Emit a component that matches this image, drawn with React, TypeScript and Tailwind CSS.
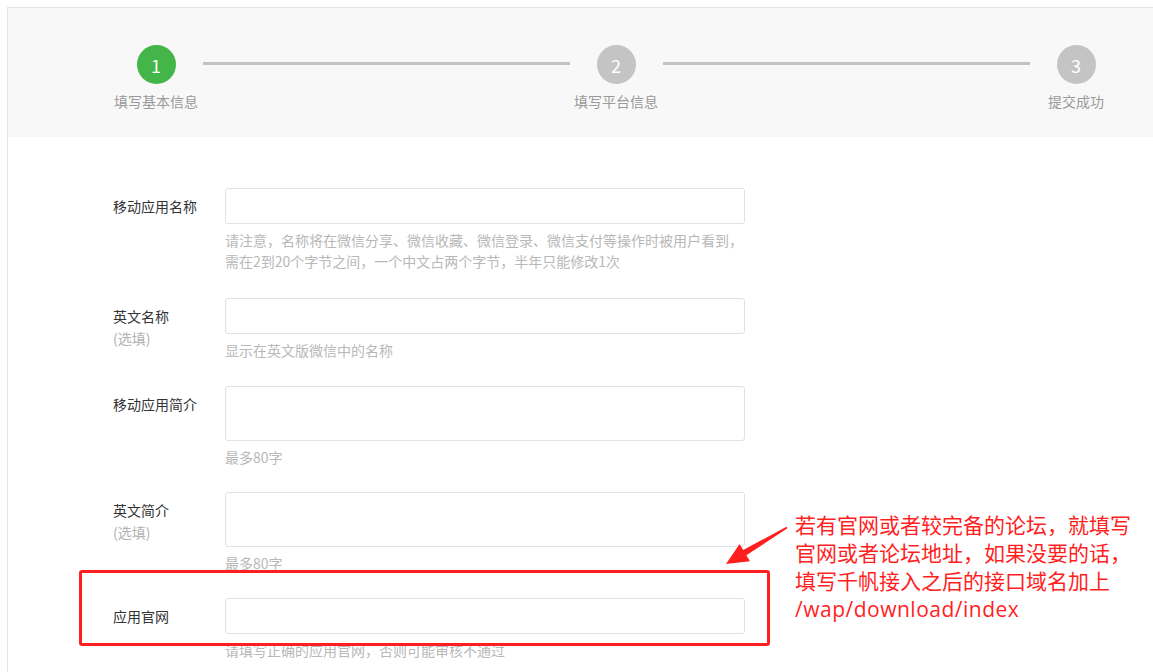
import React from "react";

function Step({ n, label, active }: { n: string; label: string; active?: boolean }) {
  return (
    <div className="w-[80px] flex flex-col items-center">
      <div
        className={`mt-[37px] w-[39px] h-[39px] rounded-full flex items-center justify-center text-white text-[18px] leading-none ${
          active ? "bg-[#44b549]" : "bg-[#c4c4c4]"
        }`}
      >
        {n}
      </div>
      <div className="mt-[7px] text-[14px] leading-[20px] text-[#9a9a9a] whitespace-nowrap">{label}</div>
    </div>
  );
}

function Row({
  label,
  optional,
  help,
  tall,
  mb,
}: {
  label: string;
  optional?: boolean;
  help: string[];
  tall?: boolean;
  mb: string;
}) {
  return (
    <div className={`flex ${mb}`}>
      <div className="w-[112px] pt-[7px] text-[14px] leading-[22px]">
        <div className="text-[#333]">{label}</div>
        {optional && <div className="text-[#b2b2b2]">(选填)</div>}
      </div>
      <div className="w-[520px]">
        <div
          className={`${tall ? "h-[55px]" : "h-[36px]"} border border-[#e2e2e2] rounded-[3px] bg-white`}
        />
        <div className="mt-[6px] text-[14px] leading-[21px] text-[#b8b8b8]">
          {help.map((h, i) => (
            <div key={i} className="whitespace-nowrap">
              {h}
            </div>
          ))}
        </div>
      </div>
    </div>
  );
}

export default function App() {
  return (
    <div className="relative w-[1153px] h-[672px] overflow-hidden bg-white pt-[7px] pl-[7px] font-['Noto_Sans_CJK_SC','Noto_Sans',sans-serif]">
      <div className="w-[1300px] h-[800px] border-l border-t border-[#e5e5e5]">
        <div className="h-[129px] bg-[#f8f8f8] flex items-start pl-[108px]">
          <Step n="1" label="填写基本信息" active />
          <div className="mt-[54px] ml-[7px] mr-[6px] w-[367px] h-[3px] bg-[#c2c2c2]" />
          <Step n="2" label="填写平台信息" />
          <div className="mt-[54px] ml-[7px] mr-[6px] w-[367px] h-[3px] bg-[#c2c2c2]" />
          <Step n="3" label="提交成功" />
        </div>
        <div className="pt-[51px] pl-[105px]">
          <Row
            label="移动应用名称"
            mb="mb-[26px]"
            help={[
              "请注意，名称将在微信分享、微信收藏、微信登录、微信支付等操作时被用户看到，",
              "需在2到20个字节之间，一个中文占两个字节，半年只能修改1次",
            ]}
          />
          <Row label="英文名称" optional mb="mb-[25px]" help={["显示在英文版微信中的名称"]} />
          <Row label="移动应用简介" tall mb="mb-[24px]" help={["最多80字"]} />
          <Row label="英文简介" optional tall mb="mb-[24px]" help={["最多80字"]} />
          <Row label="应用官网" mb="mb-[25px]" help={["请填写正确的应用官网，否则可能审核不通过"]} />
        </div>
      </div>

      <div className="absolute left-[79px] top-[570px] w-[691px] h-[76px] border-[3px] border-[#ff1f1f] rounded-[3px]" />

      <svg className="absolute left-[720px] top-[520px]" width="72" height="50" viewBox="0 0 72 50">
        <polygon
          points="6,44 19.6,24 23.2,30 66.5,6.8 67.5,8.2 26.4,35.2 30,41.2"
          fill="#ff1f1f"
        />
      </svg>

      <div className="absolute left-[795px] top-[511px] text-[21px] leading-[28px] text-[#ff1f1f] font-['Open_Sans','Noto_Sans_CJK_SC',sans-serif] whitespace-nowrap">
        <div>若有官网或者较完备的论坛，就填写</div>
        <div>官网或者论坛地址，如果没要的话，</div>
        <div>填写千帆接入之后的接口域名加上</div>
        <div className="tracking-[0.5px]">/wap/download/index</div>
      </div>
    </div>
  );
}
